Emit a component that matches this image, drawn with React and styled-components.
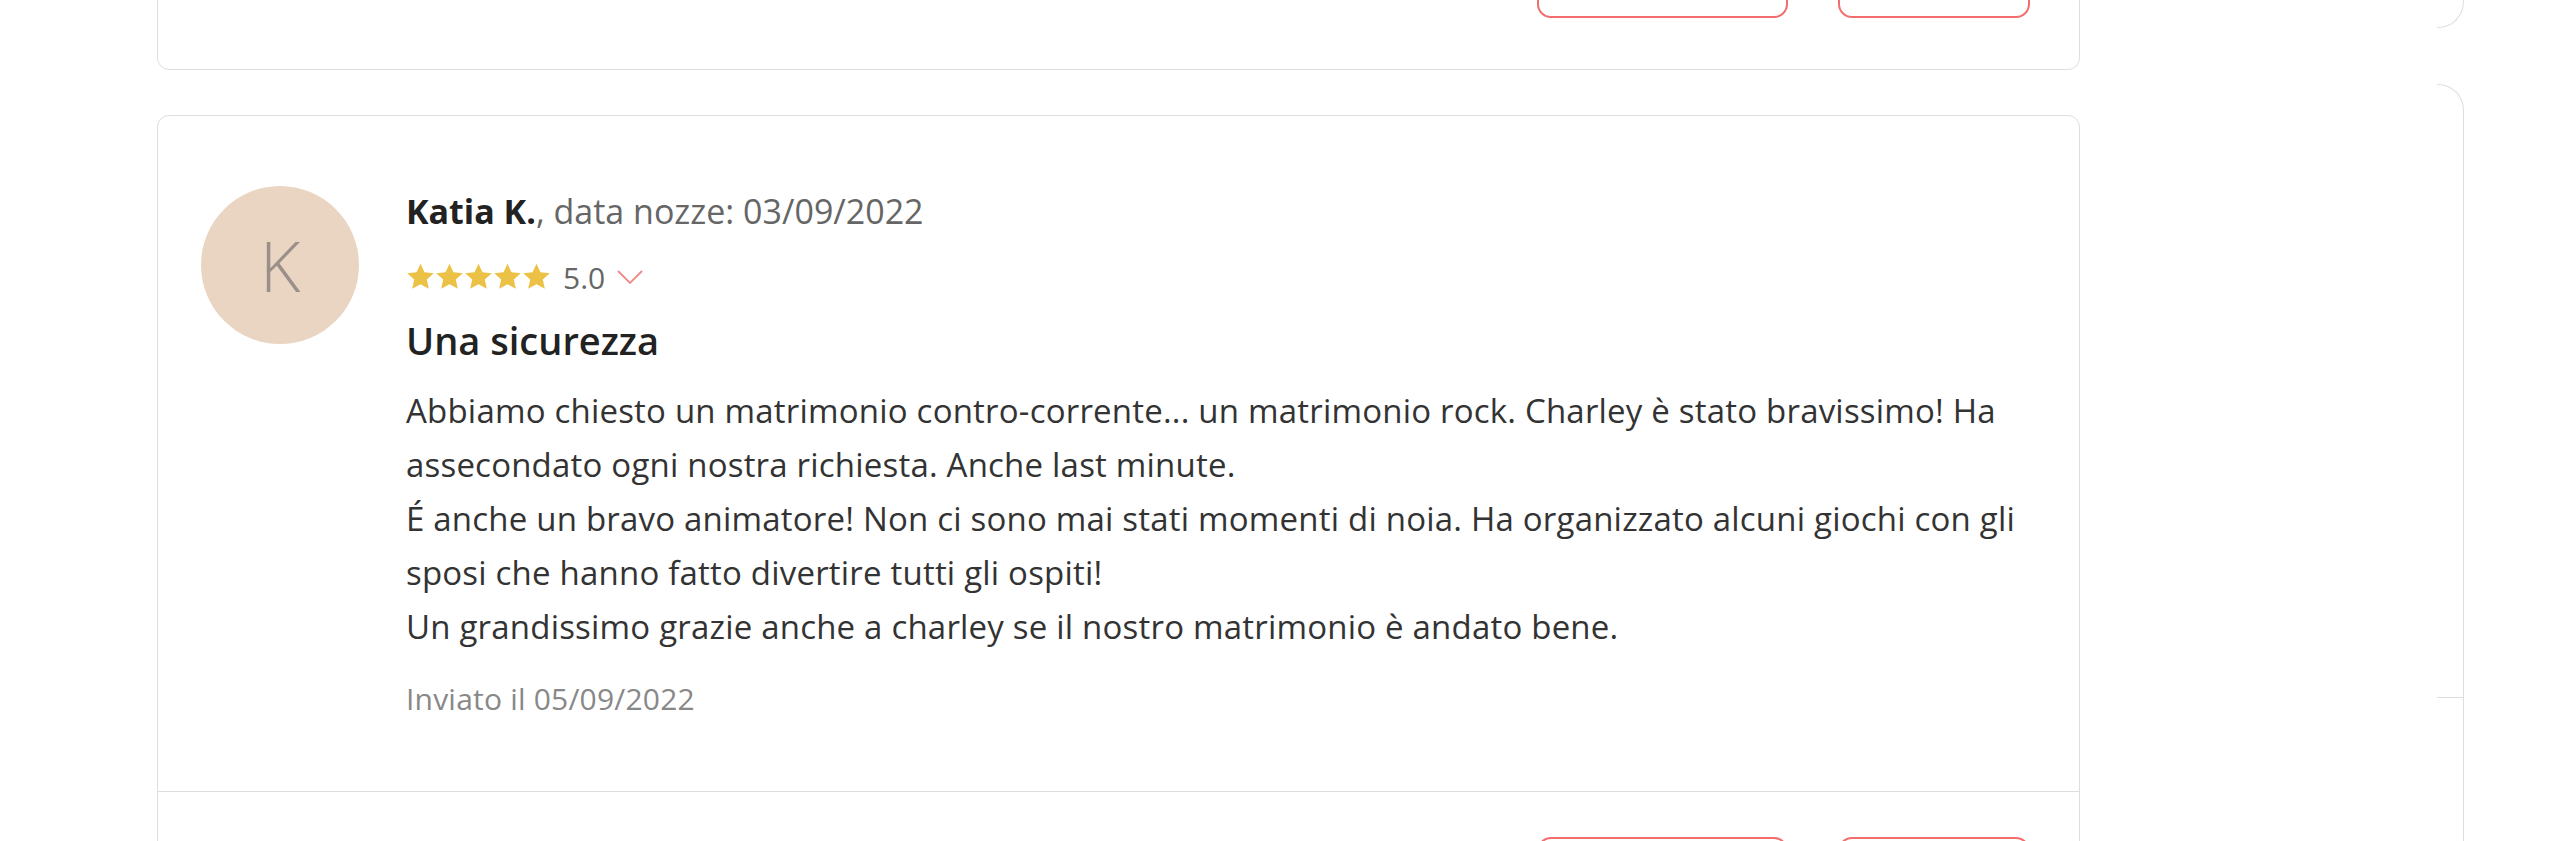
import React from 'react';
import styled, { createGlobalStyle } from 'styled-components';

const GlobalStyle = createGlobalStyle`
  html, body {
    margin: 0;
    padding: 0;
    background: #fff;
    overflow: hidden;
  }
  body {
    font-family: "Open Sans", "Liberation Sans", sans-serif;
    color: #222;
  }
`;

const Page = styled.div`
  display: flex;
  align-items: flex-start;
  padding-left: 157px;
  height: 841px;
  overflow: hidden;
`;

const Feed = styled.div`
  width: 1923px;
  display: flex;
  flex-direction: column;
  gap: 45px;
`;

const Card = styled.div`
  border: 1px solid #dedede;
  border-radius: 12px;
  background: #fff;
  margin-top: ${p => (p.$clipped ? '-89px' : '0')};
`;

const CardBody = styled.div`
  display: flex;
  align-items: flex-start;
  gap: 47px;
  padding: 70px 48px 74px 43px;
`;

const Avatar = styled.div`
  width: 158px;
  height: 158px;
  flex: none;
  border-radius: 50%;
  background: #ead5c3;
  color: #9b9089;
  font-size: 70px;
  font-weight: 300;
  display: flex;
  align-items: center;
  justify-content: center;
`;

const Content = styled.div`
  flex: 1;
  padding-top: 3px;
  display: flex;
  flex-direction: column;
`;

const Author = styled.div`
  font-size: 34px;
  line-height: 44px;
  color: #666;
  b {
    color: #222;
    font-weight: 700;
  }
`;

const Rating = styled.div`
  margin-top: 30px;
  height: 28px;
  display: flex;
  align-items: center;
  gap: 12px;
  font-size: 30px;
  color: #666;
`;

const Stars = styled.div`
  display: flex;
`;

const Title = styled.h3`
  margin: 25px 0 0;
  font-size: 38px;
  line-height: 48px;
  font-weight: 600;
  color: #222;
`;

const Text = styled.p`
  margin: 20px 0 0;
  font-size: 33px;
  letter-spacing: 0.2px;
  line-height: 54px;
  color: #333;
  white-space: nowrap;
`;

const Sent = styled.div`
  margin-top: 27px;
  font-size: 30px;
  letter-spacing: 0.2px;
  line-height: 36px;
  color: #888;
`;

const Footer = styled.div`
  border-top: 1px solid #dedede;
  display: flex;
  justify-content: flex-end;
  gap: 50px;
  padding: 45px 49px 51px;
`;

const Button = styled.button`
  width: ${p => p.$w}px;
  height: 60px;
  border: 2px solid #f26d6d;
  border-radius: 14px;
  background: #fff;
`;

const Sidebar = styled.div`
  margin-left: 357px;
  width: 27px;
  display: flex;
  flex-direction: column;
  gap: 56px;
  margin-top: -52px;
`;

const SideBox = styled.div`
  height: ${p => p.$h}px;
  border: 1px solid #dedede;
  border-left: none;
  border-radius: ${p => (p.$top ? '0 0 26px 0' : '0 26px 0 0')};
  border-bottom: ${p => (p.$top ? '1px solid #dedede' : 'none')};
  border-top: ${p => (p.$top ? 'none' : '1px solid #dedede')};
  padding-top: ${p => p.$pad || 0}px;
  box-sizing: border-box;
`;

const SideRule = styled.div`
  border-top: 1px solid #dedede;
`;

const Star = () => (
  <svg width="29" height="28" viewBox="0 0 24 23">
    <path
      fill="#ecc246"
      d="M12 .5l3.3 7.1 7.7.8-5.8 5.2 1.7 7.7L12 17.4l-6.9 3.9 1.7-7.7L1 8.4l7.7-.8z"
    />
  </svg>
);

const Chevron = () => (
  <svg width="26" height="14" viewBox="0 0 26 14">
    <path d="M1 1l12 12L25 1" fill="none" stroke="#f28a8a" strokeWidth="1.8" />
  </svg>
);

const lines = [
  'Abbiamo chiesto un matrimonio contro-corrente... un matrimonio rock. Charley è stato bravissimo! Ha',
  'assecondato ogni nostra richiesta. Anche last minute.',
  'É anche un bravo animatore! Non ci sono mai stati momenti di noia. Ha organizzato alcuni giochi con gli',
  'sposi che hanno fatto divertire tutti gli ospiti!',
  'Un grandissimo grazie anche a charley se il nostro matrimonio è andato bene.',
];

const Actions = () => (
  <Footer>
    <Button $w={251} aria-label="Rispondi" />
    <Button $w={192} aria-label="Segnala" />
  </Footer>
);

export default function App() {
  return (
    <>
      <GlobalStyle />
      <Page>
        <Feed>
          <Card $clipped>
            <Actions />
          </Card>
          <Card>
            <CardBody>
              <Avatar>K</Avatar>
              <Content>
                <Author>
                  <b>Katia K.</b>, data nozze: 03/09/2022
                </Author>
                <Rating>
                  <Stars>
                    {[0, 1, 2, 3, 4].map(i => (
                      <Star key={i} />
                    ))}
                  </Stars>
                  <span>5.0</span>
                  <Chevron />
                </Rating>
                <Title>Una sicurezza</Title>
                <Text>
                  {lines.map((l, i) => (
                    <React.Fragment key={i}>
                      {l}
                      {i < lines.length - 1 && <br />}
                    </React.Fragment>
                  ))}
                </Text>
                <Sent>Inviato il 05/09/2022</Sent>
              </Content>
            </CardBody>
            <Actions />
          </Card>
        </Feed>
        <Sidebar>
          <SideBox $top $h={80} />
          <SideBox $h={900} $pad={612}>
            <SideRule />
          </SideBox>
        </Sidebar>
      </Page>
    </>
  );
}
